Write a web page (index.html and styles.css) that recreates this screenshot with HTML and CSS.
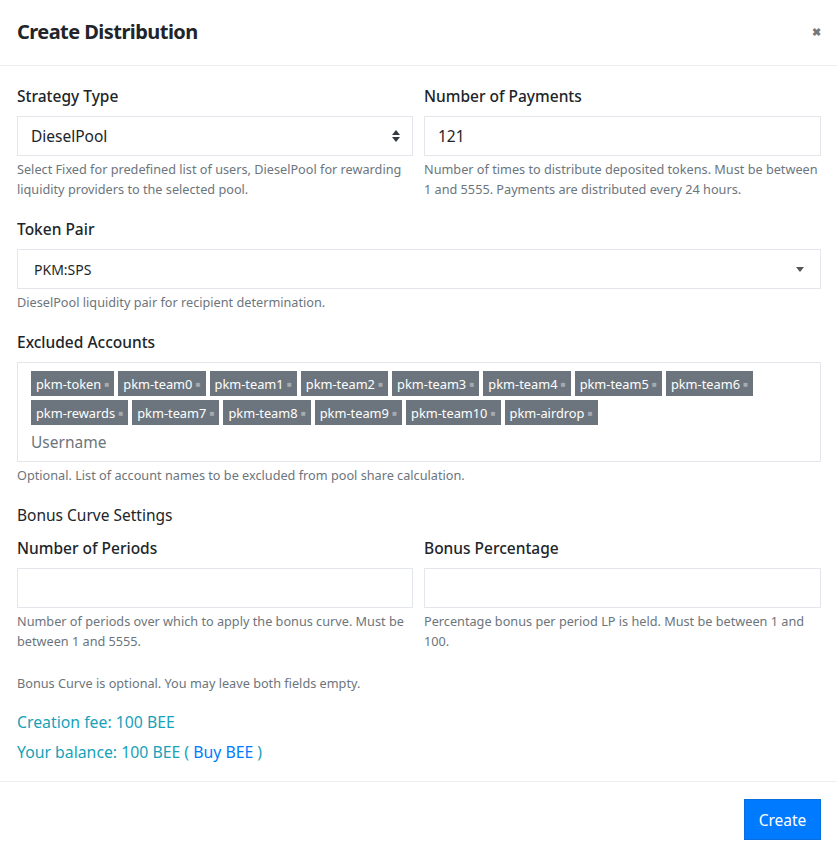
FILE: index.html
```html
<!DOCTYPE html>
<html lang="en">
<head>
  <meta charset="UTF-8">
  <meta name="viewport" content="width=device-width, initial-scale=1.0">
  <title>Create Distribution</title>
  <link rel="stylesheet" href="styles.css">
</head>
<body>
  <div class="modal">
    <!-- 标题 -->
    <div class="modal-header">
      <h5 class="modal-title">Create Distribution</h5>
      <span class="close">&#10006;</span>
    </div>

    <div class="modal-body">
      <div class="form-row">
        <div class="form-group">
          <label>Strategy Type</label>
          <div class="select">
            <span>DieselPool</span>
            <svg class="updown" width="8" height="12" viewBox="0 0 8 12"><path d="M4 0 L8 5 H0 Z M0 7 H8 L4 12 Z" fill="#343a40"/></svg>
          </div>
          <small>Select Fixed for predefined list of users, DieselPool for rewarding liquidity providers to the selected pool.</small>
        </div>
        <div class="form-group">
          <label>Number of Payments</label>
          <div class="input">121</div>
          <small>Number of times to distribute deposited tokens. Must be between 1 and 5555. Payments are distributed every 24 hours.</small>
        </div>
      </div>

      <div class="form-group">
        <label>Token Pair</label>
        <div class="select select-sm">
          <span>PKM:SPS</span>
          <svg class="caret" width="8" height="5" viewBox="0 0 8 5"><path d="M0 0 H8 L4 5 Z" fill="#555"/></svg>
        </div>
        <small>DieselPool liquidity pair for recipient determination.</small>
      </div>

      <div class="form-group">
        <label>Excluded Accounts</label>
        <div class="tags-input">
          <div class="tags">
            <span class="tag">pkm-token <i>&#9632;</i></span>
            <span class="tag">pkm-team0 <i>&#9632;</i></span>
            <span class="tag">pkm-team1 <i>&#9632;</i></span>
            <span class="tag">pkm-team2 <i>&#9632;</i></span>
            <span class="tag">pkm-team3 <i>&#9632;</i></span>
            <span class="tag">pkm-team4 <i>&#9632;</i></span>
            <span class="tag">pkm-team5 <i>&#9632;</i></span>
            <span class="tag">pkm-team6 <i>&#9632;</i></span>
            <span class="tag">pkm-rewards <i>&#9632;</i></span>
            <span class="tag">pkm-team7 <i>&#9632;</i></span>
            <span class="tag">pkm-team8 <i>&#9632;</i></span>
            <span class="tag">pkm-team9 <i>&#9632;</i></span>
            <span class="tag">pkm-team10 <i>&#9632;</i></span>
            <span class="tag">pkm-airdrop <i>&#9632;</i></span>
          </div>
          <div class="placeholder">Username</div>
        </div>
        <small>Optional. List of account names to be excluded from pool share calculation.</small>
      </div>

      <div class="section-title">Bonus Curve Settings</div>

      <div class="form-row">
        <div class="form-group">
          <label>Number of Periods</label>
          <div class="input"></div>
          <small>Number of periods over which to apply the bonus curve. Must be between 1 and 5555.</small>
        </div>
        <div class="form-group">
          <label>Bonus Percentage</label>
          <div class="input"></div>
          <small>Percentage bonus per period LP is held. Must be between 1 and 100.</small>
        </div>
      </div>

      <small class="note">Bonus Curve is optional. You may leave both fields empty.</small>

      <!-- 费用 -->
      <div class="fees">
        <div>Creation fee: 100 BEE</div>
        <div>Your balance: 100 BEE ( <a href="#">Buy BEE</a> )</div>
      </div>
    </div>

    <div class="modal-footer">
      <button class="btn">Create</button>
    </div>
  </div>
</body>
</html>
```

FILE: styles.css
```css
body {
  margin: 0;
  background: white;
  font-family: "Noto Sans", "Open Sans", sans-serif;
  color: #212529;
}

.modal {
  width: 837px;
}

/* 标题栏 */
.modal-header {
  display: flex;
  align-items: center;
  justify-content: space-between;
  height: 66px;
  box-sizing: border-box;
  padding: 0 16px 2px 17px;
  border-bottom: solid 1px #eeeeee;
}
.modal-title {
  margin: 0;
  font-size: 20px;
  font-weight: 700;
  letter-spacing: -0.55px;
}
.close {
  font-size: 11px;
  color: #777;
  font-weight: 700;
}

.modal-body {
  padding: 20px 16px 14px 17px;
}

.form-row {
  display: grid;
  grid-template-columns: 396px 397px;
  column-gap: 11px;
}

.form-group {
  display: flex;
  flex-direction: column;
  margin-bottom: 20px;
}
.form-group label {
  font-size: 15.5px;
  font-weight: 500;
  line-height: 20px;
  margin-bottom: 10px;
}

.select,
.input {
  height: 40px;
  box-sizing: border-box;
  border: solid 1px #e3e6ea;
  display: flex;
  align-items: center;
  padding: 0 12px 0 13px;
  font-size: 15.5px;
}
.select {
  justify-content: space-between;
}
.select-sm {
  font-size: 14px;
  padding-left: 16px;
  padding-right: 16px;
}

small {
  display: block;
  font-size: 12.7px;
  line-height: 20px;
  color: #6c757d;
  margin-top: 3px;
}

/* 标签输入框 */
.tags-input {
  border: solid 1px #e3e6ea;
  padding: 8px 13px 8px 13px;
}
.tags {
  display: flex;
  flex-wrap: wrap;
  gap: 4px;
}
.tag {
  background: #6c757d;
  color: white;
  font-size: 12.8px;
  height: 25px;
  line-height: 25px;
  padding: 0 5px;
}
.tag i {
  font-style: normal;
  font-size: 8px;
  color: #a5abb0;
  vertical-align: 2px;
}
.placeholder {
  color: #6c757d;
  font-size: 15.5px;
  line-height: 22px;
  margin-top: 6px;
}

.section-title {
  font-size: 15.5px;
  line-height: 20px;
  margin: 0 0 13px 0;
}

.note {
  margin: 2px 0 0 0;
}

.fees {
  margin-top: 14px;
  color: #17a2b8;
  font-size: 15.8px;
  line-height: 30px;
}
.fees a {
  color: #007bff;
  text-decoration: none;
}

/* 底部按钮 */
.modal-footer {
  border-top: solid 1px #eeeeee;
  display: flex;
  justify-content: flex-end;
  padding: 17px 16px 12px 16px;
}
.btn {
  background: #007bff;
  color: white;
  border: solid 1px #0a6fdc;
  font-family: inherit;
  font-size: 15.5px;
  width: 77px;
  height: 41px;
}
```
